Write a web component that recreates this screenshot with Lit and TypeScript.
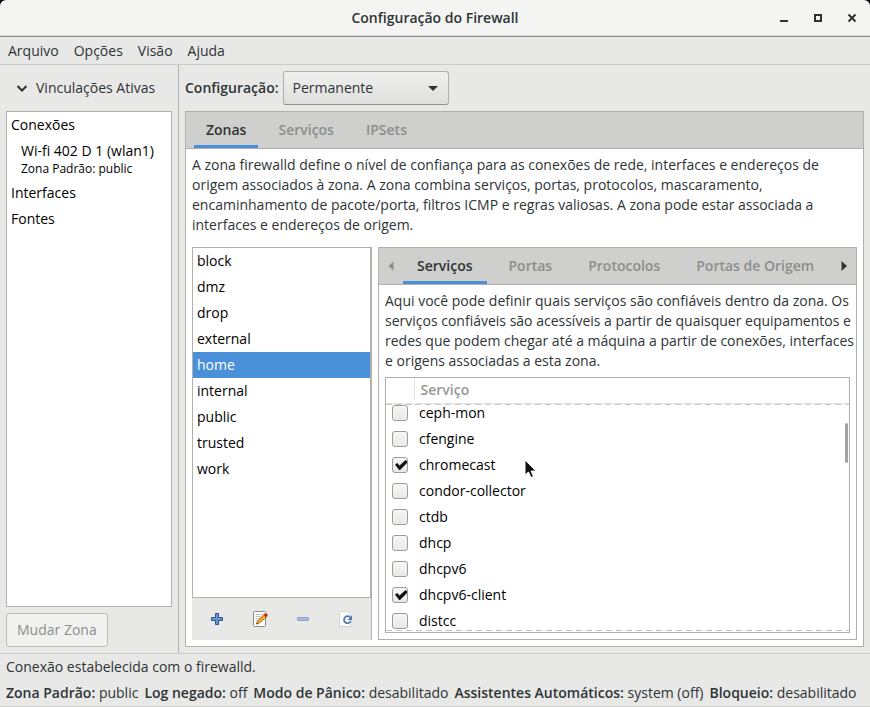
import { LitElement, html, svg, css } from "lit";
import { customElement, state, query } from "lit/decorators.js";
import { classMap } from "lit/directives/class-map.js";

interface Service {
  name: string;
  enabled: boolean;
}

const MENUS = ["Arquivo", "Opções", "Visão", "Ajuda"];
const ZONES = ["block", "dmz", "drop", "external", "home", "internal", "public", "trusted", "work"];
const SERVICES: Service[] = [
  { name: "ceph-mon", enabled: false },
  { name: "cfengine", enabled: false },
  { name: "chromecast", enabled: true },
  { name: "condor-collector", enabled: false },
  { name: "ctdb", enabled: false },
  { name: "dhcp", enabled: false },
  { name: "dhcpv6", enabled: false },
  { name: "dhcpv6-client", enabled: true },
  { name: "distcc", enabled: false },
];
const STATUS = [
  ["Zona Padrão:", "public"],
  ["Log negado:", "off"],
  ["Modo de Pânico:", "desabilitado"],
  ["Assistentes Automáticos:", "system (off)"],
  ["Bloqueio:", "desabilitado"],
];

const ZONE_HELP = `A zona firewalld define o nível de confiança para as conexões de rede, interfaces e endereços de
origem associados à zona. A zona combina serviços, portas, protocolos, mascaramento,
encaminhamento de pacote/porta, filtros ICMP e regras valiosas. A zona pode estar associada a
interfaces e endereços de origem.`;

const SERVICE_HELP = `Aqui você pode definir quais serviços são confiáveis dentro da zona. Os
serviços confiáveis são acessíveis a partir de quaisquer equipamentos e
redes que podem chegar até a máquina a partir de conexões, interfaces
e origens associadas a esta zona.`;

const icon = (size: number, body: unknown) =>
  html`<svg width=${size} height=${size} viewBox="0 0 ${size} ${size}" aria-hidden="true">${body}</svg>`;

const minimizeIcon = icon(16, svg`<path d="M4 11h8" stroke="#2e3436" stroke-width="2"/>`);
const maximizeIcon = icon(16, svg`<path d="M5 5h6v6H5z" fill="none" stroke="#2e3436" stroke-width="2"/>`);
const closeIcon = icon(16, svg`<path d="M4.500 4.500l7 7M11.500 4.500l-7 7" stroke="#2e3436" stroke-width="2"/>`);
const expanderIcon = icon(16, svg`<path d="M3.500 6l4.500 4.500L12.500 6" fill="none" stroke="#2e3436" stroke-width="2"/>`);
const leftIcon = icon(16, svg`<path d="M10.500 3.500v9L5.500 8z" fill="#8b8e8f"/>`);
const rightIcon = icon(16, svg`<path d="M5.500 3v10L11 8z" fill="#2e3436"/>`);
const addIcon = icon(16, svg`
  <path d="M6.500 2.500h3v4h4v3h-4v4h-3v-4h-4v-3h4z" fill="#6a93c9" stroke="#2c5593" stroke-linejoin="round"/>`);
const editIcon = icon(16, svg`
  <rect x="1.500" y="0.500" width="12" height="15" rx="1" fill="#fff" stroke="#888a85"/>
  <path d="M3.500 3.500h7M3.500 5.500h6M3.500 7.500h5M3.500 9.500h3" stroke="#c4c6c2"/>
  <path d="M4.500 13l1-3 7-7 2.500 2.500-7.500 6.500z" fill="#f5a52c" stroke="#9c5a0c" stroke-width=".7"/>
  <path d="M11.500 4l1.500-1.500 2.300.3.400 1.700-1.700 1.700z" fill="#cc1f1f"/>
  <path d="M4 13.500l1-2 1 1z" fill="#333"/>`);
const removeIcon = icon(16, svg`
  <rect x="2.500" y="6.500" width="11" height="3" rx=".5" fill="#a9bddb" stroke="#8ba3c8"/>`);
const reloadIcon = icon(16, svg`
  <path d="M1.500.5h8l3 3v12h-11z" fill="#fdfdfc" stroke="#d4d5d3"/>
  <path d="M12 6.200a3.500 3.500 0 1 0 .7 4" fill="none" stroke="#4a76b0" stroke-width="1.700"/>
  <path d="M14 4.500v4.500h-4.500z" fill="#4a76b0"/>`);
const pointerIcon = html`<svg class="pointer" width="13" height="20" viewBox="0 0 13 20" aria-hidden="true">
  <path d="M1 1v15l3.500-3 2.500 5.500 2.500-1-2.400-5.500H12z" fill="#111" stroke="#fff" stroke-width="1"/>
</svg>`;

@customElement("app-root")
export class AppRoot extends LitElement {
  @state() private zone = "home";
  @query(".rows") private rows!: HTMLElement;

  static styles = css`
    :host {
      display: flex;
      flex-direction: column;
      height: 100vh;
      overflow: hidden;
      background: #e8e8e7;
      color: #2e3436;
      font: 14px/20px "Open Sans", "Noto Sans", sans-serif;
    }
    * { box-sizing: border-box; }
    button { font: inherit; color: inherit; margin: 0; padding: 0; border: 0; background: none; }
    svg { display: block; flex: none; }
    ul { list-style: none; margin: 0; padding: 0; }
    p { margin: 0; white-space: pre; }
    b { font-weight: 600; }

    .backdrop { background: #000; }
    .titlebar {
      display: grid;
      grid-template-columns: 1fr auto 1fr;
      align-items: center;
      height: 37px;
      padding: 0 10px;
      background: #f4f4f3;
      border-bottom: 1px solid #8b8e8c;
      box-shadow: inset 0 -1px #d9dad8;
      border-radius: 6px 6px 0 0;
    }
    .titlebar h1 { grid-column: 2; margin: 0; font-size: 14px; line-height: 20px; font-weight: 600; }
    .window-buttons { display: flex; justify-content: flex-end; gap: 18px; }

    .menubar {
      display: flex;
      gap: 15px;
      height: 28px;
      padding: 0 8px;
      align-items: center;
      border-bottom: 1px solid #cbccca;
    }

    .main { flex: 1; min-height: 0; display: flex; }
    .side {
      flex: none;
      width: 179px;
      display: flex;
      flex-direction: column;
      padding: 6px;
      border-right: 1px solid #b4b5b3;
    }
    .expander { display: flex; align-items: center; gap: 6px; height: 34px; padding-left: 8px; margin-bottom: 6px; }
    .box { background: #fff; border: 1px solid #b0b1ae; color: #000; }
    .bindings { flex: 1; min-height: 0; margin-bottom: 6px; }
    .bindings li { padding: 3px 4px; white-space: nowrap; }
    .bindings .child { padding: 3px 14px; }
    .bindings small { display: block; font-size: 12px; line-height: 16px; }
    .change {
      align-self: flex-start;
      height: 34px;
      padding: 0 10px;
      border: 1px solid #bcbdba;
      border-radius: 3px;
      background: #f1f1f0;
      color: #8b8e8f;
    }

    .content { flex: 1; min-width: 0; display: flex; flex-direction: column; padding: 6px; }
    .config { display: flex; align-items: center; gap: 4px; margin-bottom: 6px; font-weight: 600; }
    .picker { position: relative; width: 166px; height: 34px; }
    .picker select {
      appearance: none;
      width: 100%;
      height: 100%;
      padding: 0 9px;
      border: 1px solid #b0b1ae;
      border-bottom-color: #8f918e;
      border-radius: 3px;
      background: linear-gradient(#f0f0ef, #dfdfde);
      color: #2e3436;
      font: 14px/20px "Open Sans", "Noto Sans", sans-serif;
    }
    .picker svg { position: absolute; right: 8px; top: 9px; pointer-events: none; }

    .notebook { flex: 1; min-width: 0; min-height: 0; display: flex; flex-direction: column; background: #fff; border: 1px solid #b0b1ae; }
    .tabs {
      display: flex;
      flex: none;
      height: 37px;
      padding: 0 8px;
      background: #cfcfcd;
      border-bottom: 1px solid #b0b1ae;
      font-weight: 600;
      color: #8b8e8d;
    }
    .tab-strip { flex: 1; min-width: 0; display: flex; gap: 8px; overflow: hidden; }
    .tab-strip button { height: 36px; padding: 0 12px; white-space: nowrap; border-bottom: 3px solid transparent; border-top: 2px solid transparent; }
    .tab-strip .active { color: #2e3436; border-bottom-color: #4a90d9; }
    .inner .tab-strip button { padding: 0 14px; }
    .inner .tabs { padding: 0 4px; gap: 4px; }

    .page { flex: 1; min-height: 0; display: flex; flex-direction: column; gap: 12px; padding: 6px; }
    .panes { flex: 1; min-height: 0; display: flex; gap: 6px; }
    .zones { flex: none; width: 180px; display: flex; flex-direction: column; background: #e8e8e7; border-right: 1px solid #b0b1ae; }
    .zone-list { flex: 1; min-height: 0; }
    .zone-list button { display: block; width: 100%; height: 26px; padding: 0 4px; text-align: left; }
    .zone-list .selected { background: #4a90d9; color: #fff; }
    .tools { display: flex; height: 42px; align-items: center; padding: 0 4px; }
    .tools button { flex: 1; display: grid; place-items: center; }

    .inner .page { gap: 6px; }
    .services { position: relative; flex: 1; min-height: 0; display: flex; flex-direction: column; }
    .rows { flex: 1; min-height: 0; overflow: auto; scrollbar-width: none; }
    table { width: 100%; border-collapse: collapse; table-layout: fixed; }
    .tick { width: 28px; }
    th { position: sticky; top: 0; height: 26px; padding: 0 6px 2px; text-align: left; font-weight: 600; color: #969896; background: #fff; box-shadow: inset 0 -1px #e4e4e3; z-index: 1; }
    th + th { border-left: 1px solid #e4e4e3; }
    thead th::after {
      content: "";
      position: absolute;
      inset: 26px 0 auto 0;
      height: 1px;
      background: repeating-linear-gradient(90deg, #c4c5c3 0 6px, transparent 6px 10px);
    }
    td { height: 26px; padding: 0 5px; }
    td input {
      appearance: none;
      display: block;
      width: 16px;
      height: 16px;
      margin: 0 0 0 1px;
      border: 1px solid #9b9d9a;
      border-radius: 3px;
      background: linear-gradient(#f6f6f5, #e9e9e8);
    }
    td input:checked::after {
      content: "";
      display: block;
      width: 12px;
      height: 10px;
      margin: 2px 0 0 2px;
      background: #111;
      clip-path: polygon(0 45%, 18% 30%, 38% 55%, 88% 0, 100% 12%, 100% 30%, 42% 100%, 34% 100%);
    }
    .edge {
      position: absolute;
      inset: auto 0 1px 0;
      height: 1px;
      background: repeating-linear-gradient(90deg, #c4c5c3 0 6px, transparent 6px 10px);
    }
    .thumb { position: absolute; right: 1px; top: 45px; width: 3px; height: 40px; border-radius: 2px; background: #a3a5a3; }
    .pointer { position: absolute; left: 138px; top: 81px; }

    .status { border-top: 1px solid #cbccca; border-bottom: 1px solid #cbccca; padding: 3px 6px; }
    .status-row { display: flex; gap: 6px; margin-top: 6px; white-space: nowrap; }
  `;

  firstUpdated() {
    this.rows.scrollTop = 4;
  }

  render() {
    return html`
      <div class="backdrop">
        <header class="titlebar">
          <h1>Configuração do Firewall</h1>
          <div class="window-buttons">
            <button aria-label="Minimizar">${minimizeIcon}</button>
            <button aria-label="Maximizar">${maximizeIcon}</button>
            <button aria-label="Fechar">${closeIcon}</button>
          </div>
        </header>
      </div>
      <nav class="menubar">${MENUS.map((m) => html`<button>${m}</button>`)}</nav>
      <div class="main">
        <aside class="side">
          <button class="expander">${expanderIcon}<span>Vinculações Ativas</span></button>
          <ul class="bindings box">
            <li>Conexões</li>
            <li class="child">Wi-fi 402 D 1 (wlan1)<small>Zona Padrão: public</small></li>
            <li>Interfaces</li>
            <li>Fontes</li>
          </ul>
          <button class="change" disabled>Mudar Zona</button>
        </aside>
        <main class="content">
          <div class="config">
            <label for="mode">Configuração:</label>
            <div class="picker">
              <select id="mode"><option>Permanente</option></select>
              ${icon(16, svg`<path d="M3 6h10L8 11z" fill="#2e3436"/>`)}
            </div>
          </div>
          <section class="notebook">
            <div class="tabs">
              <div class="tab-strip">
                <button class="active">Zonas</button><button>Serviços</button><button>IPSets</button>
              </div>
            </div>
            <div class="page">
              <p>${ZONE_HELP}</p>
              <div class="panes">
                <div class="zones">
                  <ul class="zone-list box">
                    ${ZONES.map((z) => html`<li><button
                      class=${classMap({ selected: z === this.zone })}
                      @click=${() => (this.zone = z)}>${z}</button></li>`)}
                  </ul>
                  <div class="tools">
                    <button aria-label="Adicionar Zona">${addIcon}</button>
                    <button aria-label="Editar Zona">${editIcon}</button>
                    <button aria-label="Remover Zona">${removeIcon}</button>
                    <button aria-label="Carregar Padrões da Zona">${reloadIcon}</button>
                  </div>
                </div>
                <section class="notebook inner">
                  <div class="tabs">
                    <button aria-label="Anterior">${leftIcon}</button>
                    <div class="tab-strip">
                      <button class="active">Serviços</button><button>Portas</button>
                      <button>Protocolos</button><button>Portas de Origem</button>
                    </div>
                    <button aria-label="Próxima">${rightIcon}</button>
                  </div>
                  <div class="page">
                    <p>${SERVICE_HELP}</p>
                    <div class="services box">
                      <div class="rows">
                        <table>
                          <thead><tr><th class="tick"></th><th>Serviço</th></tr></thead>
                          <tbody>
                            ${SERVICES.map((s) => html`<tr>
                              <td><input type="checkbox" id=${s.name} .checked=${s.enabled}></td>
                              <td><label for=${s.name}>${s.name}</label></td>
                            </tr>`)}
                          </tbody>
                        </table>
                      </div>
                      <div class="edge"></div>
                      <div class="thumb"></div>
                      ${pointerIcon}
                    </div>
                  </div>
                </section>
              </div>
            </div>
          </section>
        </main>
      </div>
      <footer class="status">
        <div>Conexão estabelecida com o firewalld.</div>
        <div class="status-row">
          ${STATUS.map(([k, v]) => html`<span><b>${k}</b> ${v}</span>`)}
        </div>
      </footer>
    `;
  }
}
